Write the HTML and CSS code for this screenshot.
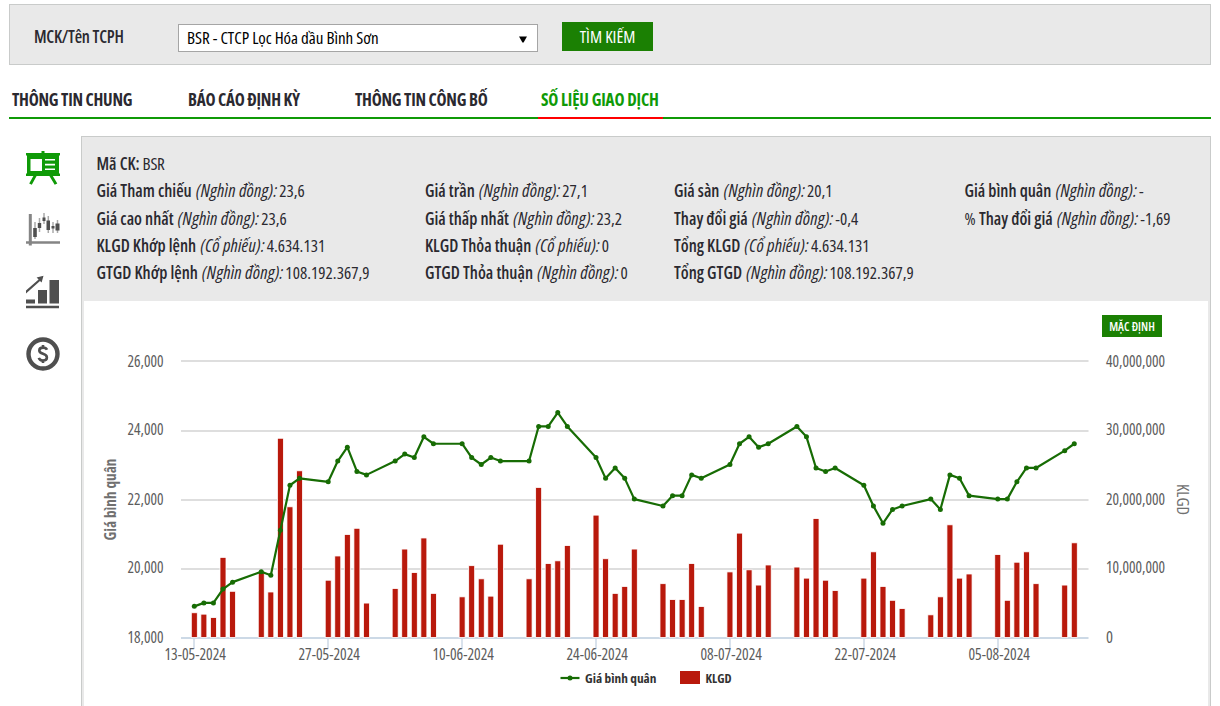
FILE: index.html
```
<!DOCTYPE html>
<html lang="vi">
<head>
    <meta charset="UTF-8">
    <meta name="viewport" content="width=device-width, initial-scale=1.0">
    <title>Số liệu giao dịch - BSR</title>
    <link rel="stylesheet" href="styles.css">
</head>
<body>
    <!-- Search bar -->
    <div class="search">
        <label class="search-label" for="company">MCK/Tên TCPH</label>
        <div class="select" id="company">
            <span class="select-text">BSR - CTCP Lọc Hóa dầu Bình Sơn</span>
            <svg class="arrow" width="8" height="7" viewBox="0 0 8 7"><path d="M0 0.5h8L4.6 6.5h-1.2z"/></svg>
        </div>
        <button class="search-button">TÌM KIẾM</button>
    </div>

    <!-- Tabs -->
    <div class="tabs">
        <a class="tab tab-general">THÔNG TIN CHUNG</a>
        <a class="tab tab-report">BÁO CÁO ĐỊNH KỲ</a>
        <a class="tab tab-news">THÔNG TIN CÔNG BỐ</a>
        <a class="tab tab-trade active">SỐ LIỆU GIAO DỊCH</a>
    </div>

    <div class="content">
        <!-- Side menu -->
        <div class="side">
            <svg class="side-icon green" width="34" height="34" viewBox="0 0 34 34">
                <path d="M15.500 0h3v2H34v2.500h-1v18h1V25h-7.200l4.500 7.400-2.600 1.400L23.400 25H10.600l-4.800 8.800-2.600-1.400L7.400 25H0v-2.500h1v-18H0V2h15.500z"/>
                <path class="hole" d="M4.500 8h11.500v12H4.500zM19 8h10v1.600H19zM19 12.800h10v1.600H19zM19 17.400h10V19H19z"/>
            </svg>
            <svg class="side-icon" width="34" height="34" viewBox="0 0 34 34">
                <path class="soft" d="M2.800 1h3v31.500h-3zM0 28.300h34v2.400H0z"/>
                <path class="thin" d="M9 9v17M13.500 5v14M18 0v11M22.300 3v17M27 9v11M31.500 7v13"/>
                <path d="M7.200 15h3.600v9H7.200zM11.800 10h3.400v5h-3.400zM16.500 4.500h3v3.500h-3zM20.500 7.500H24V17h-3.500zM25.500 13h3v2.500h-3zM29.500 10.500h4v7h-4z"/>
            </svg>
            <svg class="side-icon" width="34" height="34" viewBox="0 0 34 34">
                <path d="M0 24.500h9V28.500H0zM12 15h9v13.500h-9zM23.500 5h9.500v23.500h-9.500zM0 30.800h33v2.500H0zM0 15.600L12.600 4.600 10.600 2.600 17.500.8 15.600 7.600 14 6 0 18.600z"/>
            </svg>
            <svg class="side-icon" width="34" height="34" viewBox="0 0 34 34">
                <circle class="ring" cx="17" cy="17" r="14.500"/>
                <path class="dollar" d="M21 12.800C20.300 11.200 19 10.600 17 10.600c-2.400 0-3.700 1.200-3.700 2.900 0 4.200 7.600 2.500 7.600 6.900 0 1.900-1.500 3.100-3.900 3.100-2.200 0-3.600-.8-4.200-2.700M17 8v3M17 23v3"/>
            </svg>
        </div>

        <div class="panel">
            <!-- Stock summary -->
            <div class="info">
                <div class="cell full"><b>Mã CK:</b> BSR</div>
                <div class="cell"><b>Giá Tham chiếu</b> <i>(Nghìn đồng):</i>23,6</div>
                <div class="cell"><b>Giá trần</b> <i>(Nghìn đồng):</i>27,1</div>
                <div class="cell"><b>Giá sàn</b> <i>(Nghìn đồng):</i>20,1</div>
                <div class="cell"><b>Giá bình quân</b> <i>(Nghìn đồng):</i>-</div>
                <div class="cell"><b>Giá cao nhất</b> <i>(Nghìn đồng):</i>23,6</div>
                <div class="cell"><b>Giá thấp nhất</b> <i>(Nghìn đồng):</i>23,2</div>
                <div class="cell"><b>Thay đổi giá</b> <i>(Nghìn đồng):</i>-0,4</div>
                <div class="cell">% <b>Thay đổi giá</b> <i>(Nghìn đồng):</i>-1,69</div>
                <div class="cell"><b>KLGD Khớp lệnh</b> <i>(Cổ phiếu):</i>4.634.131</div>
                <div class="cell"><b>KLGD Thỏa thuận</b> <i>(Cổ phiếu):</i>0</div>
                <div class="cell wide"><b>Tổng KLGD</b> <i>(Cổ phiếu):</i>4.634.131</div>
                <div class="cell"><b>GTGD Khớp lệnh</b> <i>(Nghìn đồng):</i>108.192.367,9</div>
                <div class="cell"><b>GTGD Thỏa thuận</b> <i>(Nghìn đồng):</i>0</div>
                <div class="cell wide"><b>Tổng GTGD</b> <i>(Nghìn đồng):</i>108.192.367,9</div>
            </div>

            <!-- Chart -->
            <div class="chart-box">
                <button class="reset-button">MẶC ĐỊNH</button>
                <svg class="chart" id="chart" width="1124" height="405" viewBox="0 0 1124 405"></svg>
            </div>
        </div>
    </div>

<script>
    // One row per week: first day offset from 13-05-2024, prices (thousand), volumes (million)
    const weeks = [
        [0, [18.9, 19.0, 19.0, 19.4, 19.6], [3.5, 3.3, 2.8, 11.5, 6.6]],
        [7, [19.9, 19.8, 21.1, 22.4, 22.6], [9.5, 6.5, 28.7, 18.8, 24.0]],
        [14, [22.5, 23.1, 23.5, 22.8, 22.7], [8.2, 11.7, 14.8, 15.7, 4.9]],
        [21, [23.1, 23.3, 23.2, 23.8, 23.6], [7.0, 12.7, 9.3, 14.3, 6.3]],
        [28, [23.6, 23.2, 23.0, 23.2, 23.1], [5.8, 10.3, 8.4, 5.9, 13.4]],
        [35, [23.1, 24.1, 24.1, 24.5, 24.1], [8.4, 21.6, 10.6, 11.0, 13.2]],
        [42, [23.2, 22.6, 22.9, 22.6, 22.0], [17.6, 11.3, 6.3, 7.3, 12.7]],
        [49, [21.8, 22.1, 22.1, 22.7, 22.6], [7.7, 5.4, 5.4, 10.6, 4.4]],
        [56, [23.0, 23.6, 23.8, 23.5, 23.6], [9.4, 15.0, 9.7, 7.5, 10.4]],
        [63, [24.1, 23.8, 22.9, 22.8, 22.9], [10.1, 8.5, 17.1, 8.2, 6.7]],
        [70, [22.4, 21.8, 21.3, 21.7, 21.8], [8.5, 12.3, 7.3, 5.3, 4.1]],
        [77, [22.0, 21.7, 22.7, 22.6, 22.1], [3.2, 5.8, 16.2, 8.5, 9.1]],
        [84, [22.0, 22.0, 22.5, 22.9, 22.9], [11.9, 5.3, 10.8, 12.3, 7.7]],
        [91, [23.4, 23.6], [7.5, 13.6]]
    ];
    const dates = ['13-05-2024', '27-05-2024', '10-06-2024', '24-06-2024', '08-07-2024', '22-07-2024', '05-08-2024'];
    const bottom = 336.5;
    const dayX = day => 110.3 + day * 9.565;
    const priceY = price => bottom - (price - 18) * 34.6;

    // Text squeezed or stretched to a fixed width
    function text(name, place, width, value) {
        return `<text class="${name}" ${place} textLength="${width}" lengthAdjust="spacingAndGlyphs">${value}</text>`;
    }

    let grid = '';
    let bars = '';
    let dots = '';
    let points = [];

    // Grid lines and labels of both value axes
    for (let i = 0; i < 5; i++) {
        let y = [337, 268, 199, 130, 60][i];
        grid += `<line class="${i ? 'grid' : 'axis'}" x1="97" x2="1004.5" y1="${y}" y2="${y}"/>`;
        let textY = [341.5, 271.5, 203.5, 133.5, 65.5][i];
        grid += text('label', `x="43.5" y="${textY}"`, 36, 18 + i * 2 + ',000');
        grid += text('label', `x="1022" y="${textY}"`, i ? 59 : 7, i ? i * 10 + ',000,000' : 0);
    }
    dates.forEach((date, i) => {
        let x = Math.round(dayX(i * 14));
        grid += `<line class="tick" x1="${x}" x2="${x}" y1="337" y2="348"/>`;
        grid += text('label', `x="${x - 29.5}" y="359"`, 61.5, date);
    });

    weeks.forEach(([start, prices, volumes]) => {
        prices.forEach((price, i) => {
            let x = dayX(start + i);
            let h = volumes[i] * 6.925;
            bars += `<rect class="bar" x="${x - 3}" y="${bottom - h - 0.5}" width="6" height="${h + 0.5}"/>`;
            dots += `<circle class="dot" cx="${x}" cy="${priceY(price)}" r="2.5"/>`;
            points.push(x + ',' + priceY(price));
        });
    });

    let titles = text('title bold', 'transform="translate(32 239.5) rotate(-90)"', 82, 'Giá bình quân')
        + text('title', 'transform="translate(1093 183) rotate(90)"', 31, 'KLGD');

    let legend = '<line class="line" x1="476.5" x2="495.5" y1="377" y2="377"/><circle class="dot" cx="486" cy="377" r="2.5"/>'
        + text('legend', 'x="501" y="382"', 71.5, 'Giá bình quân')
        + '<rect class="swatch" x="596" y="370" width="20" height="13"/>'
        + text('legend', 'x="621.5" y="382"', 26, 'KLGD');

    document.getElementById('chart').innerHTML = grid + bars
        + `<polyline class="line" points="${points.join(' ')}"/>` + dots + titles + legend;
</script>
</body>
</html>
```
FILE: styles.css
```
* {
    box-sizing: border-box;
}
body {
    margin: 0;
    padding: 4px 9px 0;
    height: 706px;
    overflow: hidden;
    font-family: "Open Sans", sans-serif;
    font-stretch: 75%;
    font-size: 17px;
    color: #2b2930;
    background-color: #fff;
}
button {
    font-family: inherit;
    font-stretch: inherit;
    border: 0;
    padding: 0;
    color: #fff;
    background-color: #1b8003;
    cursor: pointer;
}

/* Search bar */
.search {
    display: flex;
    align-items: flex-start;
    height: 61px;
    width: 1202px;
    padding: 18px 0 0 24px;
    border: 1px solid #c9cbca;
    background-color: #e9e9e9;
}
.search-label {
    width: 144px;
    line-height: 28px;
    font-size: 17px;
    font-weight: 600;
    letter-spacing: -0.25px;
}
.select {
    display: flex;
    align-items: flex-start;
    justify-content: space-between;
    width: 360px;
    height: 28px;
    margin-top: 1px;
    padding: 0 10px 0 8px;
    border: 1px solid #a5a5a5;
    background-color: #fff;
    color: #000;
}
.select-text {
    line-height: 26px;
    letter-spacing: -0.05px;
}
.arrow {
    margin-top: 11px;
}
.search-button {
    width: 91px;
    height: 29px;
    margin: -1px 0 0 24px;
    font-size: 17px;
}

/* Tabs */
.tabs {
    display: flex;
    width: 1202px;
    height: 54px;
    padding-top: 20px;
    border-bottom: 2px solid #0f9a07;
}
.tab {
    height: 34px;
    padding: 0 3px;
    line-height: 30px;
    font-weight: 700;
    letter-spacing: -0.25px;
    white-space: nowrap;
}
.tab-general {
    width: 176px;
}
.tab-report {
    width: 167px;
}
.tab-news {
    width: 186px;
}
.tab-trade {
    width: 125px;
    letter-spacing: -0.15px;
}
.tab.active {
    color: #0f9a07;
    border-bottom: 2px solid #f00;
}

.content {
    display: flex;
    padding-top: 17px;
}

/* Side menu */
.side {
    display: flex;
    flex-direction: column;
    gap: 28px;
    width: 72px;
    padding: 15px 0 0 16.5px;
}
.side-icon {
    fill: #4f4f4f;
}
.green {
    fill: #0f9a07;
}
.hole {
    fill: #fff;
}
.soft {
    fill: #858585;
}
.thin {
    stroke: #aaa;
    stroke-width: 1.5;
}
.ring {
    fill: none;
    stroke: #4f4f4f;
    stroke-width: 4.4;
}
.dollar {
    fill: none;
    stroke: #4f4f4f;
    stroke-width: 2.6;
}

/* Panel */
.panel {
    width: 1130px;
    height: 600px;
    padding: 0 2px;
    border: 1px solid #c9cbca;
    background-color: #e9e9e9;
}
.info {
    display: grid;
    grid-template-columns: 328.5px 249px 290.5px 1fr;
    grid-auto-rows: 27.3px;
    height: 164px;
    padding: 13px 0 0 12.5px;
    line-height: 27px;
    white-space: nowrap;
}
.full {
    grid-column: span 4;
}
.wide {
    grid-column: span 2;
}
.cell {
    letter-spacing: 0.05px;
}
.full {
    letter-spacing: -0.25px;
}
.cell b {
    font-weight: 600;
    letter-spacing: 0;
}
.cell i {
    margin: 0 2px 0 1px;
    font-size: 18px;
    letter-spacing: 0.2px;
}

/* Chart */
.chart-box {
    display: flex;
    position: relative;
    height: 434px;
    background-color: #fff;
}
.reset-button {
    position: absolute;
    top: 14px;
    right: 46px;
    width: 60px;
    height: 22px;
    font-size: 12px;
    font-weight: 600;
}
.grid {
    stroke: #dedede;
    stroke-width: 2;
}
.axis {
    stroke: #ccd9e6;
    stroke-width: 2;
}
.tick {
    stroke: #ccd9e6;
    stroke-width: 1.5;
}
.label {
    font-size: 15.5px;
    fill: #5c5c5c;
}
.title {
    font-size: 16px;
    fill: #707070;
}
.bold {
    font-weight: 700;
}
.bar {
    fill: #b9190c;
    stroke: #fff;
    stroke-width: 0.8;
}
.swatch {
    fill: #b9190c;
}
.line {
    fill: none;
    stroke: #176c04;
    stroke-width: 2.2;
    stroke-linejoin: round;
}
.dot {
    fill: #176c04;
}
.legend {
    font-size: 13px;
    font-weight: 700;
    fill: #333;
}
```
